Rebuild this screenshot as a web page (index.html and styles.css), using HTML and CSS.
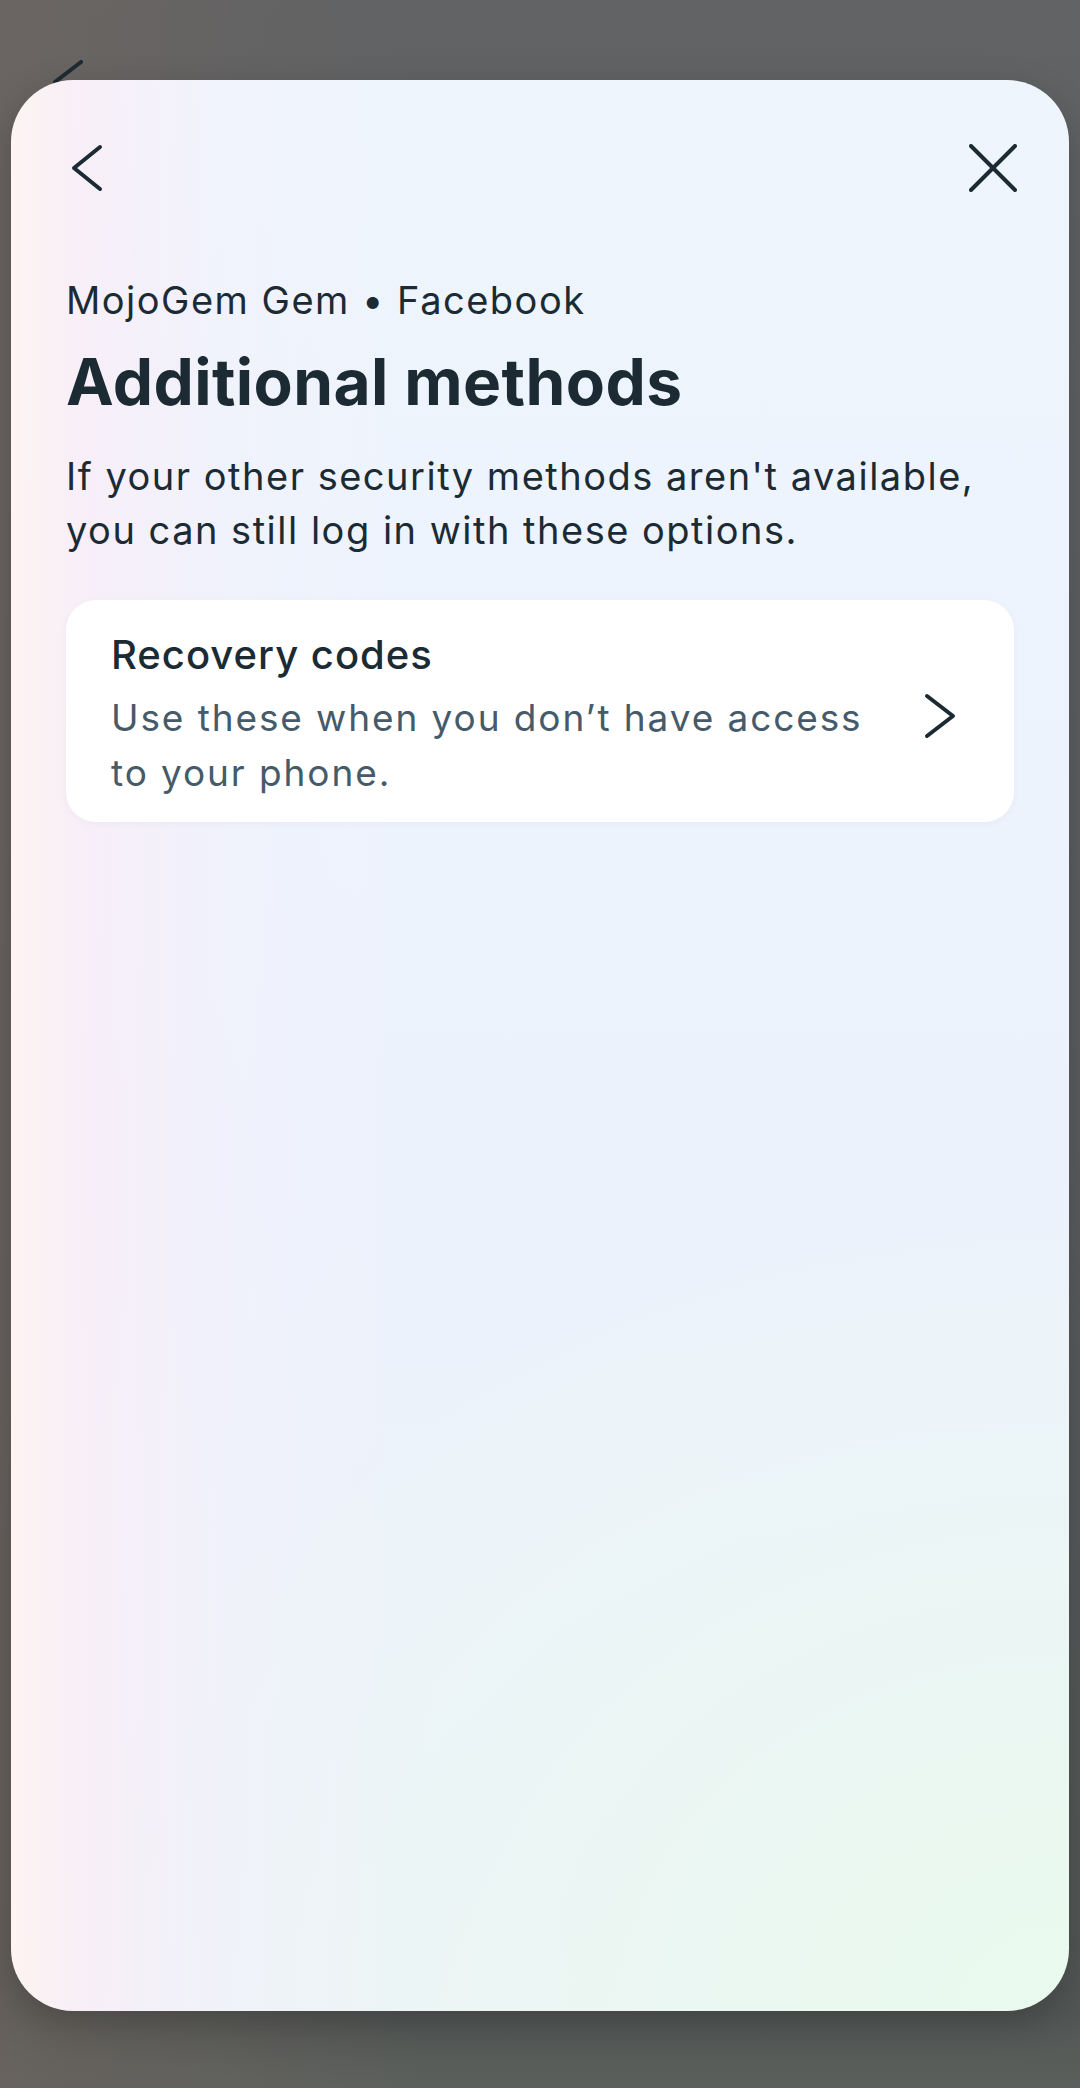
FILE: index.html
```html
<!DOCTYPE html>
<html lang="en">
<head>
<meta charset="utf-8">
<link rel="stylesheet" href="styles.css">
</head>
<body>
<svg class="behind-chevron" width="40" height="60" viewBox="0 0 40 60"><path d="M30 2 L4 22 L30 42" fill="none" stroke="#1c2b33" stroke-width="4" stroke-linecap="round" stroke-linejoin="round"/></svg>
<main class="sheet">
  <header class="topbar">
    <svg class="icon-back" width="32" height="48" viewBox="0 0 32 48"><path d="M29 3 L3 24 L29 45" fill="none" stroke="#1c2b33" stroke-width="4" stroke-linecap="round" stroke-linejoin="round"/></svg>
    <svg class="icon-close" width="48" height="48" viewBox="0 0 48 48"><path d="M2 2 L46 46 M46 2 L2 46" fill="none" stroke="#1c2b33" stroke-width="4" stroke-linecap="round"/></svg>
  </header>
  <section class="content">
    <p class="account">MojoGem Gem • Facebook</p>
    <h1 class="title">Additional methods</h1>
    <p class="lead">If your other security methods aren't available, you can still log in with these options.</p>
    <div class="option">
      <div class="option-text">
        <div class="option-title">Recovery codes</div>
        <div class="option-desc">Use these when you don’t have access to your phone.</div>
      </div>
      <svg class="icon-chevron" width="32" height="46" viewBox="0 0 32 46"><path d="M3 3 L29 23 L3 43" fill="none" stroke="#1c2b33" stroke-width="4" stroke-linecap="round" stroke-linejoin="round"/></svg>
    </div>
  </section>
</main>
</body>
</html>
```
FILE: styles.css
```css
html, body {
  margin: 0;
  padding: 0;
}
body {
  width: 1080px;
  height: 2088px;
  overflow: hidden;
  position: relative;
  font-family: Inter, "Noto Sans", sans-serif;
  color: #1c2b33;
  background:
    linear-gradient(90deg, rgba(112,102,96,0.6) 0, rgba(96,98,102,0) 420px),
    linear-gradient(180deg, #616365 0%, #5b5d5f 50%, #525654 96.5%, #5c605d 100%);
}
.behind-chevron {
  position: absolute;
  left: 51px;
  top: 60px;
}
.sheet {
  position: relative;
  margin: 80px 11px 0;
  height: 1931px;
  border-radius: 62px;
  overflow: hidden;
  box-shadow: 0 12px 36px rgba(0,0,0,0.22);
  background:
    linear-gradient(90deg, rgba(255,244,242,0.95) 0, rgba(251,237,246,0.75) 70px, rgba(246,239,251,0.4) 200px, rgba(240,244,252,0) 380px),
    radial-gradient(ellipse 1000px 800px at 100% 100%, rgba(233,250,237,1) 0, rgba(234,248,240,0.65) 45%, rgba(236,244,248,0) 100%),
    linear-gradient(180deg, #eef5fd 0%, #ecf2fc 55%, #edf3f8 100%);
}
.topbar {
  height: 176px;
  display: flex;
  align-items: center;
  justify-content: space-between;
  padding: 0 52px 0 60px;
}
.content {
  padding: 20px 55px 0;
}
.account {
  margin: 0;
  font-size: 38px;
  line-height: 48px;
  font-weight: 400;
  letter-spacing: 1.5px;
}
.title {
  margin: 20px 0 0;
  font-size: 64px;
  line-height: 76px;
  font-weight: 700;
  letter-spacing: 0.4px;
}
.lead {
  margin: 29px 0 0;
  font-size: 38px;
  line-height: 54px;
  font-weight: 400;
  letter-spacing: 1.5px;
}
.option {
  margin-top: 43px;
  background: #ffffff;
  border-radius: 30px;
  box-sizing: border-box;
  display: flex;
  align-items: center;
  padding: 31px 58px 22px 45px;
  gap: 40px;
  box-shadow: 0 2px 8px rgba(0,0,0,0.03);
}
.option-text {
  flex: 1;
}
.option-title {
  font-size: 40px;
  line-height: 48px;
  font-weight: 500;
  letter-spacing: 1px;
}
.option-desc {
  margin-top: 11px;
  font-size: 37px;
  line-height: 55px;
  color: #465a69;
  letter-spacing: 1.9px;
}
```
